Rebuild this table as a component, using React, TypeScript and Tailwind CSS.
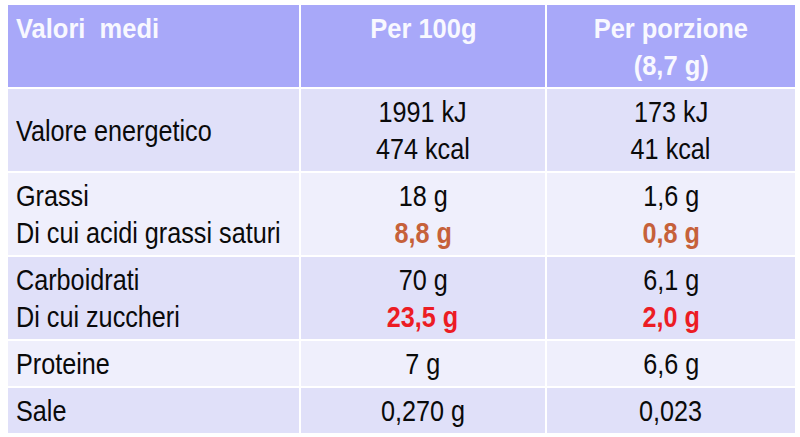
type Cell = { text: string; color?: string };
type Row = { label: string[]; a: Cell[]; b: Cell[]; bg: string };

const rows: Row[] = [
  {
    label: ["Valore energetico"],
    a: [{ text: "1991 kJ" }, { text: "474 kcal" }],
    b: [{ text: "173 kJ" }, { text: "41 kcal" }],
    bg: "bg-[#e0e0f9]",
  },
  {
    label: ["Grassi", "Di cui acidi grassi saturi"],
    a: [{ text: "18 g" }, { text: "8,8 g", color: "orange" }],
    b: [{ text: "1,6 g" }, { text: "0,8 g", color: "orange" }],
    bg: "bg-[#efeffc]",
  },
  {
    label: ["Carboidrati", "Di cui zuccheri"],
    a: [{ text: "70 g" }, { text: "23,5 g", color: "red" }],
    b: [{ text: "6,1 g" }, { text: "2,0 g", color: "red" }],
    bg: "bg-[#e0e0f9]",
  },
  {
    label: ["Proteine"],
    a: [{ text: "7 g" }],
    b: [{ text: "6,6 g" }],
    bg: "bg-[#efeffc]",
  },
  {
    label: ["Sale"],
    a: [{ text: "0,270 g" }],
    b: [{ text: "0,023" }],
    bg: "bg-[#e0e0f9]",
  },
];

// the source font is a narrow Arial, so squeeze Liberation Sans horizontally
const Narrow = ({ children, left }: { children: string; left?: boolean }) => (
  <span
    className={`inline-block whitespace-pre scale-x-[0.84] ${left ? "origin-left" : "origin-center"}`}
  >
    {children}
  </span>
);

const HeadText = ({ children, left }: { children: string; left?: boolean }) => (
  <span
    className={`inline-block whitespace-pre scale-x-[0.91] ${left ? "origin-left" : "origin-center"}`}
  >
    {children}
  </span>
);

const Value = ({ cell }: { cell: Cell }) => {
  if (cell.color === "orange")
    return (
      <div className="font-bold text-[#c6613a]">
        <Narrow>{cell.text}</Narrow>
      </div>
    );
  if (cell.color === "red")
    return (
      <div className="font-bold text-[#ec1c24]">
        <Narrow>{cell.text}</Narrow>
      </div>
    );
  return (
    <div>
      <Narrow>{cell.text}</Narrow>
    </div>
  );
};

const App = () => {
  return (
    <div className="w-[800px] h-[437px] bg-white pt-[5px] pl-[8px] font-['Liberation_Sans',Arial,sans-serif]">
      <div className="grid grid-cols-[291px_244px_248px] gap-[2px] w-[787px] text-[30px] leading-[37px] text-[#0a0a0a]">
        {/* header */}
        <div className="h-[82px] bg-[#a8a8f9] px-[8px] pt-[5px] font-bold text-[28px] text-[#f8f8ff]">
          <HeadText left>{"Valori  medi"}</HeadText>
        </div>
        <div className="h-[82px] bg-[#a8a8f9] pt-[5px] font-bold text-[28px] text-[#f8f8ff] text-center">
          <HeadText>Per 100g</HeadText>
        </div>
        <div className="h-[82px] bg-[#a8a8f9] pt-[5px] font-bold text-[28px] text-[#f8f8ff] text-center">
          <div>
            <HeadText>Per porzione</HeadText>
          </div>
          <div>
            <HeadText>(8,7 g)</HeadText>
          </div>
        </div>

        {rows.map((r) => (
          <>
            <div
              key={r.label[0] + "-l"}
              className={`${r.bg} px-[8px] py-[4px] flex flex-col justify-center`}
            >
              {r.label.map((l) => (
                <div key={l}>
                  <Narrow left>{l}</Narrow>
                </div>
              ))}
            </div>
            <div
              key={r.label[0] + "-a"}
              className={`${r.bg} py-[4px] text-center flex flex-col justify-center`}
            >
              {r.a.map((c) => (
                <Value key={c.text} cell={c} />
              ))}
            </div>
            <div
              key={r.label[0] + "-b"}
              className={`${r.bg} py-[4px] text-center flex flex-col justify-center`}
            >
              {r.b.map((c) => (
                <Value key={c.text} cell={c} />
              ))}
            </div>
          </>
        ))}
      </div>
    </div>
  );
};

export default App;
